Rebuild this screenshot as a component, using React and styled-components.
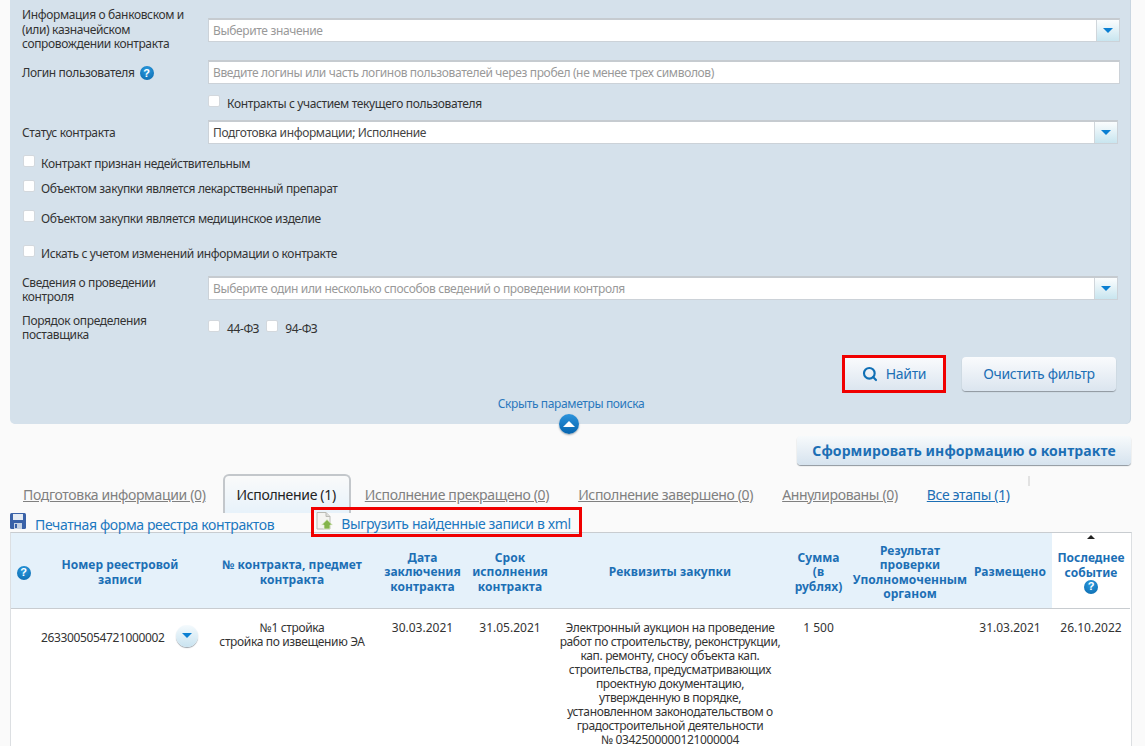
import React from 'react';
import styled, { createGlobalStyle } from 'styled-components';
import { Search } from 'lucide-react';

const GlobalStyle = createGlobalStyle`
  html, body {
    margin: 0;
    height: 746px;
    overflow: hidden;
    background: #fafafa;
  }
  body {
    font-family: "Noto Sans", Tahoma, sans-serif;
    font-size: 12px;
    letter-spacing: -0.36px;
    color: #333;
  }
`;

const Page = styled.div`
  padding: 0 14px 0 10px;
  width: 1121px;
`;

const Panel = styled.div`
  position: relative;
  background: #d5e1eb;
  border-radius: 0 0 5px 5px;
  padding: 8px 10px 13px 12px;
  box-shadow: 1px 0 0 #c9d6e1;
  width: 1098px;
`;

const FormRow = styled.div`
  display: grid;
  grid-template-columns: 186px 1fr;
  align-items: ${(p) => p.$align || 'center'};
  margin-top: ${(p) => p.$top || 0}px;
`;

const Label = styled.div`
  line-height: 14.5px;
  display: flex;
  align-items: center;
  gap: 5px;
  padding-top: ${(p) => p.$shift || 0}px;
`;

const Control = styled.div`
  display: flex;
  height: 24px;
  box-sizing: border-box;
  background: #fff;
  border: 1px solid #ccd2d8;
  border-top: 2px solid #c6cbd0;
  margin-right: ${(p) => (p.$narrow ? 2 : 0)}px;
  margin-top: ${(p) => p.$top || 0}px;
`;

const ControlText = styled.div`
  flex: 1;
  padding-left: 4px;
  line-height: 21px;
  color: ${(p) => (p.$placeholder ? '#999' : '#444')};
`;

const DropButton = styled.div`
  width: 22px;
  display: flex;
  align-items: center;
  justify-content: center;
  background: linear-gradient(#fbfdfe, #c8e5ef);
  border-left: 1px solid #d0d6db;
`;

const DownArrow = styled.span`
  width: 0;
  height: 0;
  border-left: 5px solid transparent;
  border-right: 5px solid transparent;
  border-top: 5px solid #0a7fd2;
`;

const CheckLine = styled.label`
  display: flex;
  align-items: center;
  gap: ${(p) => p.$gap || 6}px;
  height: 20px;
  padding-top: 2px;
  box-sizing: border-box;
  margin-top: ${(p) => p.$top || 0}px;
  padding-left: ${(p) => p.$left || 0}px;
`;

const Check = styled.input.attrs({ type: 'checkbox' })`
  appearance: none;
  width: 12px;
  height: 12px;
  margin: 0 0 5px;
  background: #fff;
  border: 1px solid #d3d8dd;
  border-radius: 2px;
  box-sizing: border-box;
`;

const CheckGroup = styled.div`
  display: flex;
  align-items: center;
  gap: 7px;
  margin-top: 7px;
`;

const HelpIcon = styled.span`
  display: inline-flex;
  align-items: center;
  justify-content: center;
  width: 14px;
  height: 14px;
  border-radius: 50%;
  background: radial-gradient(circle at 50% 30%, #2b9be0, #0a67ab);
  color: #fff;
  font-size: 11px;
  font-weight: 700;
  line-height: 1;
  letter-spacing: 0;
  font-family: "Liberation Sans", sans-serif;
`;

const Actions = styled.div`
  display: flex;
  justify-content: flex-end;
  gap: 18px;
  margin-top: 14px;
  padding-right: 4px;
`;

const ActionButton = styled.button`
  position: relative;
  display: flex;
  align-items: center;
  justify-content: center;
  gap: 8px;
  height: 34px;
  width: ${(p) => p.$width}px;
  padding: 0;
  border: 0;
  border-radius: 4px;
  background: linear-gradient(#fafbfd, #dbe5ef);
  box-shadow: 0 1px 1px #8d959d;
  color: #1c6fb5;
  font: inherit;
  font-size: 14px;
  letter-spacing: -0.33px;
  ${(p) =>
    p.$marked &&
    `
    &::after {
      content: '';
      position: absolute;
      inset: -2px;
      border: 3px solid #f00000;
    }
  `}
`;

const HideLink = styled.div`
  text-align: center;
  margin-top: 6px;
  line-height: 14px;
  color: #2a78bd;
`;

const Collapse = styled.span`
  position: absolute;
  left: 549px;
  bottom: -10px;
  width: 20px;
  height: 20px;
  border-radius: 50%;
  display: flex;
  align-items: center;
  justify-content: center;
  background: linear-gradient(#2b93dc, #0664ae);
  box-shadow: 0 1px 2px #9aa3ab;
  &::after {
    content: '';
    border-left: 6px solid transparent;
    border-right: 6px solid transparent;
    border-bottom: 6px solid #fff;
  }
`;

const FormAction = styled.div`
  display: flex;
  justify-content: flex-end;
  margin-top: 12px;
`;

const MakeButton = styled.button`
  width: 334px;
  height: 29px;
  padding: 0;
  border: 0;
  border-radius: 4px;
  background: linear-gradient(#f7fafc, #d6e3ee);
  box-shadow: 0 1px 1px #8d959d;
  color: #1c6fb5;
  font: inherit;
  font-size: 14px;
  font-weight: 700;
  letter-spacing: 0.08px;
`;

const Tabs = styled.div`
  display: flex;
  align-items: stretch;
  height: 39px;
  margin-top: 9px;
  padding-left: 13px;
`;

const Tab = styled.div`
  padding-top: 12px;
  margin-right: 29px;
  font-size: 14px;
  line-height: 18px;
  letter-spacing: -0.35px;
  box-sizing: border-box;
  color: ${(p) => (p.$current ? '#1c6fb5' : '#808080')};
  text-decoration: underline;
`;

const ActiveTab = styled.div`
  padding: 10px 13px 0 12px;
  margin: 0 14px 0 -12px;
  font-size: 14px;
  line-height: 18px;
  letter-spacing: -0.33px;
  box-sizing: border-box;
  color: #222;
  border: 2px solid #c3c7cb;
  border-bottom: 0;
  border-radius: 6px 6px 0 0;
  background: linear-gradient(#fafafa, #e7f2fa);
`;

const TabEnd = styled.span`
  width: 2px;
  height: 10px;
  margin: 2px 0 0 -11px;
  background: #e2e2e2;
`;

const Links = styled.div`
  display: flex;
  height: 19px;
  font-size: 14px;
  letter-spacing: -0.38px;
`;

const LinkItem = styled.a`
  display: flex;
  align-items: flex-start;
  gap: ${(p) => p.$gap}px;
  color: #1c78c0;
  line-height: 23px;
  position: relative;
  z-index: 1;
  ${(p) =>
    p.$marked &&
    `
    height: 20px;
    margin: -1px 0 0 42px;
    padding-right: 6px;
    outline: 3px solid #f00000;
    outline-offset: 2px;
  `}
`;

const Table = styled.div`
  border: 1px solid #dcdfe2;
  border-top-color: #c8ccd0;
  border-bottom: 0;
  width: 1120px;
  background: #fff;
`;

const TableRow = styled.div`
  display: grid;
  grid-template-columns: 25px 168px 176px 85px 90px 230px 67px 116px 84px 78px;
`;

const HeadCell = styled.div`
  position: relative;
  height: 76px;
  box-sizing: border-box;
  padding-top: 5px;
  display: flex;
  flex-direction: column;
  align-items: center;
  justify-content: center;
  text-align: center;
  line-height: 14.2px;
  font-weight: 700;
  letter-spacing: 0.05px;
  color: #1c6fb5;
  background: ${(p) => (p.$sorted ? '#fff' : '#e5f1fa')};
  border-bottom: 1px solid #c8ccd0;
`;

const SortMark = styled.span`
  position: absolute;
  top: 2px;
  left: 35px;
  border-left: 4px solid transparent;
  border-right: 4px solid transparent;
  border-bottom: 4px solid #222;
`;

const BodyCell = styled.div`
  text-align: center;
  line-height: 14px;
  padding-top: 12px;
  color: #333;
`;

const DateCell = styled(BodyCell)`
  letter-spacing: 0;
`;

const NumberCell = styled.div`
  display: flex;
  align-items: center;
  gap: 11px;
  height: 22px;
  margin-top: 16px;
  padding-left: 5px;
`;

const NumberText = styled.span`
  padding-top: 3px;
`;

const Expand = styled.span`
  width: 22px;
  height: 22px;
  border-radius: 50%;
  display: flex;
  align-items: center;
  justify-content: center;
  background: linear-gradient(#f4fafd, #c9e3f0);
  box-shadow: 0 1px 1px #9aa3ab;
`;

const SaveIcon = () => (
  <svg width="16" height="16" viewBox="0 0 16 16">
    <rect width="16" height="16" rx="1.5" fill="#3a62a8" />
    <rect x="3" y="1" width="10" height="6" fill="#e4ebf4" />
    <rect x="4" y="10" width="8" height="6" fill="#c7d3e4" />
    <rect x="5" y="11" width="2" height="4" fill="#3a62a8" />
  </svg>
);

const ExportIcon = () => (
  <svg width="17" height="18" viewBox="0 0 17 18">
    <path d="M1 .5h9l4 4V17H1z" fill="#f4f4f1" stroke="#b9bab4" />
    <path d="M10 .5v4h4" fill="#dcdcd8" stroke="#b9bab4" />
    <path d="M11 7.500l5.500 5.500H14v4H8v-4H5.500z" fill="#84b44a" stroke="#e9f2da" strokeWidth=".7" />
  </svg>
);

const headers = [
  { key: 'help', text: <HelpIcon>?</HelpIcon> },
  { key: 'num', text: <>Номер реестровой<br />записи</> },
  { key: 'contract', text: <>№ контракта, предмет<br />контракта</> },
  { key: 'date', text: <>Дата<br />заключения<br />контракта</> },
  { key: 'term', text: <>Срок<br />исполнения<br />контракта</> },
  { key: 'req', text: 'Реквизиты закупки' },
  { key: 'sum', text: <>Сумма<br />(в<br />рублях)</> },
  { key: 'result', text: <>Результат<br />проверки<br />Уполномоченным<br />органом</> },
  { key: 'placed', text: 'Размещено' },
];

const tabs = ['Исполнение прекращено (0)', 'Исполнение завершено (0)', 'Аннулированы (0)'];

const App = () => {
  return (
    <Page>
      <GlobalStyle />
      <Panel>
        <FormRow>
          <Label>Информация о банковском и<br />(или) казначейском<br />сопровождении контракта</Label>
          <Control>
            <ControlText $placeholder>Выберите значение</ControlText>
            <DropButton><DownArrow /></DropButton>
          </Control>
        </FormRow>
        <FormRow $top={8}>
          <Label $shift={3}>Логин пользователя <HelpIcon>?</HelpIcon></Label>
          <Control>
            <ControlText $placeholder>Введите логины или часть логинов пользователей через пробел (не менее трех символов)</ControlText>
          </Control>
        </FormRow>
        <FormRow $top={9}>
          <span />
          <CheckLine $gap={7}><Check />Контракты с участием текущего пользователя</CheckLine>
        </FormRow>
        <FormRow $top={7}>
          <Label $shift={3}>Статус контракта</Label>
          <Control $narrow>
            <ControlText>Подготовка информации; Исполнение</ControlText>
            <DropButton><DownArrow /></DropButton>
          </Control>
        </FormRow>
        <CheckLine $top={9} $left={1}><Check />Контракт признан недействительным</CheckLine>
        <CheckLine $top={5} $left={1}><Check />Объектом закупки является лекарственный препарат</CheckLine>
        <CheckLine $top={10} $left={1}><Check />Объектом закупки является медицинское изделие</CheckLine>
        <CheckLine $top={15} $left={1}><Check />Искать с учетом изменений информации о контракте</CheckLine>
        <FormRow $top={12} $align="start">
          <Label $shift={1}>Сведения о проведении<br />контроля</Label>
          <Control $narrow $top={1}>
            <ControlText $placeholder>Выберите один или несколько способов сведений о проведении контроля</ControlText>
            <DropButton><DownArrow /></DropButton>
          </Control>
        </FormRow>
        <FormRow $top={8} $align="start">
          <Label $shift={1}>Порядок определения<br />поставщика</Label>
          <CheckGroup>
            <Check />44-ФЗ
            <Check />94-ФЗ
          </CheckGroup>
        </FormRow>
        <Actions>
          <ActionButton $width={100} $marked><Search size={16} strokeWidth={3.2} color="#0f6fb5" />Найти</ActionButton>
          <ActionButton $width={154}>Очистить фильтр</ActionButton>
        </Actions>
        <HideLink>Скрыть параметры поиска</HideLink>
        <Collapse />
      </Panel>

      <FormAction>
        <MakeButton>Сформировать информацию о контракте</MakeButton>
      </FormAction>

      <Tabs>
        <Tab>Подготовка информации (0)</Tab>
        <ActiveTab>Исполнение (1)</ActiveTab>
        {tabs.map((t) => <Tab key={t}>{t}</Tab>)}
        <Tab $current>Все этапы (1)</Tab>
        <TabEnd />
      </Tabs>

      <Links>
        <LinkItem $gap={9}><SaveIcon />Печатная форма реестра контрактов</LinkItem>
        <LinkItem $gap={8} $marked><ExportIcon />Выгрузить найденные записи в xml</LinkItem>
      </Links>

      <Table>
        <TableRow>
          {headers.map((h) => <HeadCell key={h.key}>{h.text}</HeadCell>)}
          <HeadCell $sorted>
            <SortMark />
            Последнее<br />событие
            <HelpIcon>?</HelpIcon>
          </HeadCell>
        </TableRow>
        <TableRow>
          <span />
          <NumberCell><NumberText>2633005054721000002</NumberText><Expand><DownArrow /></Expand></NumberCell>
          <BodyCell>№1 стройка<br />стройка по извещению ЭА</BodyCell>
          <DateCell>30.03.2021</DateCell>
          <DateCell>31.05.2021</DateCell>
          <BodyCell>
            Электронный аукцион на проведение<br />
            работ по строительству, реконструкции,<br />
            кап. ремонту, сносу объекта кап.<br />
            строительства, предусматривающих<br />
            проектную документацию,<br />
            утвержденную в порядке,<br />
            установленном законодательством о<br />
            градостроительной деятельности<br />
            № 0342500000121000004
          </BodyCell>
          <DateCell>1 500</DateCell>
          <span />
          <DateCell>31.03.2021</DateCell>
          <DateCell>26.10.2022</DateCell>
        </TableRow>
      </Table>
    </Page>
  );
};

export default App;
